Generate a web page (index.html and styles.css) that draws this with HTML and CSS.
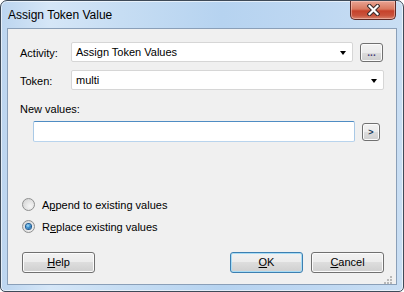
FILE: index.html
```html
<!doctype html>
<html lang="en">
  <head>
    <meta charset="UTF-8" />
    <title>Assign Token Value</title>
    <link rel="stylesheet" href="styles.css">
  </head>
  <body>
    <div class="window">
      <div class="titlebar">
        <span class="title">Assign Token Value</span>
        <button class="close" type="button" aria-label="Close">
          <svg width="13" height="12" viewBox="0 0 13 12">
            <path d="M2.5 2 L10.5 10 M10.5 2 L2.5 10" stroke="#3a2a2a" stroke-width="4.2" stroke-linecap="square" />
            <path d="M2.5 2 L10.5 10 M10.5 2 L2.5 10" stroke="#ffffff" stroke-width="2.2" stroke-linecap="square" />
          </svg>
        </button>
      </div>

      <div class="client">
        <div class="row row-activity">
          <label class="field-label">Activity:</label>
          <div class="combo combo-activity">
            <span>Assign Token Values</span>
            <i class="arrow"></i>
          </div>
          <button class="btn btn-small btn-browse" type="button">...</button>
        </div>

        <div class="row row-token">
          <label class="field-label">Token:</label>
          <div class="combo combo-token">
            <span>multi</span>
            <i class="arrow"></i>
          </div>
        </div>

        <div class="values-label">New values:</div>
        <div class="row row-values">
          <div class="textbox"></div>
          <button class="btn btn-small btn-add" type="button">&gt;</button>
        </div>

        <div class="radio-row radio-first">
          <span class="radio"></span>
          <span>A<u>p</u>pend to existing values</span>
        </div>
        <div class="radio-row radio-second">
          <span class="radio checked"></span>
          <span>R<u>e</u>place existing values</span>
        </div>

        <div class="footer">
          <button class="btn btn-dialog" type="button"><u>H</u>elp</button>
          <span class="spacer"></span>
          <button class="btn btn-dialog btn-default" type="button"><u>O</u>K</button>
          <button class="btn btn-dialog" type="button"><u>C</u>ancel</button>
        </div>

        <svg class="grip" width="10" height="8" viewBox="0 0 10 8">
          <rect x="7" y="0" width="2" height="2" fill="#b8b8b8" />
          <rect x="4" y="3" width="2" height="2" fill="#b8b8b8" />
          <rect x="7" y="3" width="2" height="2" fill="#b8b8b8" />
          <rect x="1" y="6" width="2" height="2" fill="#b8b8b8" />
          <rect x="4" y="6" width="2" height="2" fill="#b8b8b8" />
          <rect x="7" y="6" width="2" height="2" fill="#b8b8b8" />
        </svg>
      </div>
    </div>
  </body>
</html>
```

FILE: styles.css
```css
/* Reset */
body,
button,
label {
  margin: 0;
  padding: 0;
  box-sizing: border-box;
}

body {
  width: 404px;
  height: 292px;
  overflow: hidden;
  background: #ffffff;
  font-family: "Liberation Sans", Arial, sans-serif;
  font-size: 11px;
  color: #000;
}

/* Window frame */
.window {
  width: 404px;
  height: 292px;
  box-sizing: border-box;
  border: 1px solid #3e4a58;
  border-radius: 7px 7px 5px 5px;
  background: linear-gradient(to right, #bcd5ef 0%, #d5e6f7 12%, #c6ddf3 30%, #b6d3f0 55%, #bfd8f2 80%, #c9def3 100%);
  box-shadow: inset 0 0 0 1px rgba(255, 255, 255, 0.6);
  display: flex;
  flex-direction: column;
}

.titlebar {
  height: 27px;
  display: flex;
  align-items: flex-start;
}

.title {
  padding: 7px 0 0 7px;
  font-size: 12px;
  line-height: 14px;
  color: #000;
}

.close {
  margin-left: auto;
  margin-right: 7px;
  width: 46px;
  height: 19px;
  border: 1px solid #5e2a25;
  border-top: none;
  border-radius: 0 0 5px 5px;
  background: linear-gradient(#e8a493 0%, #d9785f 45%, #c6422b 55%, #c9533c 80%, #d9826c 100%);
  box-shadow: inset 0 0 0 1px rgba(255, 220, 210, 0.45);
  display: flex;
  align-items: center;
  justify-content: center;
  padding: 0 0 1px 0;
}

.close svg {
  display: block;
}

/* Client area */
.client {
  position: relative;
  height: 257px;
  margin: 0 6px;
  box-sizing: border-box;
  border: 1px solid #8a9fb8;
  background: #f0f0f0;
  padding: 13px 12px 0 12px;
}

.row {
  display: flex;
  align-items: flex-start;
}

.field-label {
  width: 51px;
  line-height: 20px;
  padding-top: 1px;
}

.combo {
  height: 20px;
  box-sizing: border-box;
  border: 1px solid #d6d6d6;
  border-radius: 2px;
  background: #fff;
  display: flex;
  align-items: center;
  padding: 0 6px 0 4px;
}

.combo span {
  flex: 1;
  line-height: 18px;
}

.combo-activity {
  width: 282px;
}

.combo-token {
  width: 313px;
}

.arrow {
  width: 0;
  height: 0;
  border-left: 3.5px solid transparent;
  border-right: 3.5px solid transparent;
  border-top: 4px solid #000;
  margin-top: 1px;
}

.row-token {
  margin-top: 7px;
}

.values-label {
  margin-top: 12px;
  line-height: 13px;
}

.row-values {
  margin-top: 5px;
  padding-left: 13px;
}

.textbox {
  width: 322px;
  height: 21px;
  box-sizing: border-box;
  border: 1px solid;
  border-color: #4f8cc3 #a9c9e6 #b9d4ed #a9c9e6;
  border-radius: 2px;
  background: #fff;
}

/* Buttons */
.btn {
  box-sizing: border-box;
  border: 1px solid #707070;
  border-radius: 3px;
  background: linear-gradient(#f2f2f2 0%, #ebebeb 50%, #dddddd 50%, #cfcfcf 100%);
  box-shadow: inset 0 0 0 1px #fbfbfb;
  font-family: "Liberation Sans", Arial, sans-serif;
  font-size: 11px;
  color: #000;
  padding: 0;
  text-align: center;
}

.btn-small {
  font-size: 10px;
  line-height: 14px;
}

.btn-browse {
  width: 23px;
  height: 19px;
  margin-left: 7px;
  margin-top: 1px;
  color: #4a3f7a;
  font-weight: bold;
  letter-spacing: 0;
}

.btn-add {
  width: 18px;
  height: 18px;
  margin-left: 7px;
  margin-top: 2px;
  font-size: 9px;
  font-weight: bold;
  color: #1c3a5a;
}

.btn-dialog {
  width: 73px;
  height: 21px;
  line-height: 19px;
}

.btn-default {
  border-color: #3c7fb1;
  box-shadow: inset 0 0 0 1px #a8dcf5;
}

/* Radio buttons */
.radio-row {
  display: flex;
  align-items: center;
  height: 13px;
  padding-left: 2px;
}

.radio-first {
  margin-top: 56px;
}

.radio-second {
  margin-top: 9px;
}

.radio {
  width: 13px;
  height: 13px;
  box-sizing: border-box;
  border: 1px solid #8e8f8f;
  border-radius: 50%;
  background: radial-gradient(circle at 65% 65%, #f6f6f6 0%, #e4e4e4 45%, #cfcfcf 100%);
  margin-right: 7px;
  display: flex;
  align-items: center;
  justify-content: center;
}

.radio.checked::after {
  content: "";
  width: 5px;
  height: 5px;
  border-radius: 50%;
  background: radial-gradient(circle at 40% 35%, #a9e2fb 0%, #3a8fcf 45%, #0d4b85 100%);
  box-shadow: 0 0 0 1px #1f5b93;
}

/* Footer */
.footer {
  display: flex;
  margin-top: 19px;
  padding-left: 2px;
}

.spacer {
  flex: 1;
}

.footer .btn + .btn {
  margin-left: 8px;
}

.spacer + .btn {
  margin-left: 0;
}

.grip {
  position: absolute;
  right: 3px;
  bottom: 0;
}
```
